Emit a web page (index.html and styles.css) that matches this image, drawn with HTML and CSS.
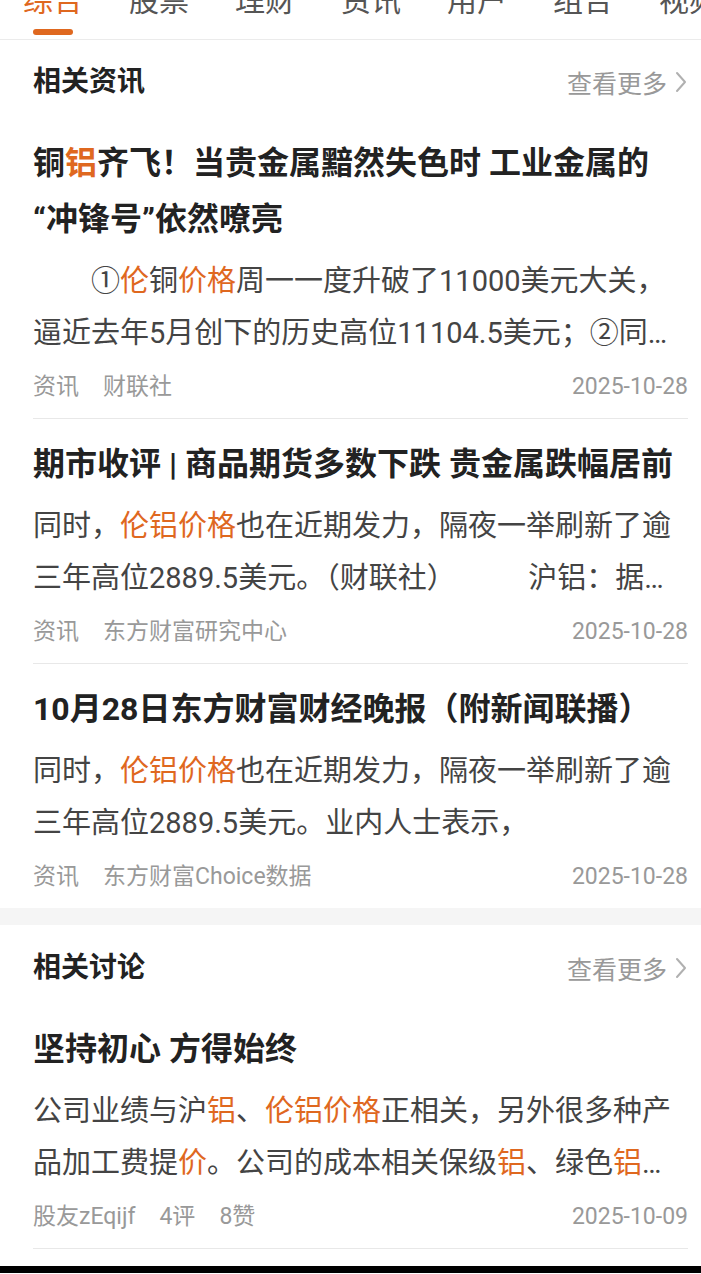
FILE: index.html
```html
<!DOCTYPE html>
<html lang="zh-CN">
<head>
    <meta charset="UTF-8">
    <meta name="viewport" content="width=device-width, initial-scale=1.0">
    <title>搜索结果 - 综合</title>
    <link rel="stylesheet" href="styles.css">
</head>
<body>

    <div class="tabs">
        <div class="tab-row">
            <div class="tab active">综合<span class="indicator"></span></div>
            <div class="tab">股票</div>
            <div class="tab">理财</div>
            <div class="tab">资讯</div>
            <div class="tab">用户</div>
            <div class="tab">组合</div>
            <div class="tab">视频</div>
        </div>
    </div>

    <div class="section">
        <div class="section-head">
            <h2>相关资讯</h2>
            <a class="more">查看更多
                <svg width="14" height="22" viewBox="0 0 14 22"><polyline points="3,2 11,11 3,20" fill="none" stroke="#b0b0b0" stroke-width="2" stroke-linecap="round" stroke-linejoin="round"/></svg>
            </a>
        </div>

        <div class="item">
            <h3 class="title">铜<em>铝</em>齐飞！当贵金属黯然失色时 工业金属的“冲锋号”依然嘹亮</h3>
            <p class="summary indent">①<em>伦</em>铜<em>价格</em>周一一度升破了11000美元大关，逼近去年5月创下的历史高位11104.5美元；②同时，伦铝价格也在近期发力，隔夜一举刷新了逾三年高位。</p>
            <div class="meta">
                <span>资讯</span>
                <span>财联社</span>
                <span class="date">2025-10-28</span>
            </div>
        </div>

        <div class="item">
            <h3 class="title">期市收评 | 商品期货多数下跌 贵金属跌幅居前</h3>
            <p class="summary">同时，<em>伦铝价格</em>也在近期发力，隔夜一举刷新了逾三年高位2889.5美元。（财联社）　　　沪铝：据上海有色网报道，国内铝锭社会库存继续下降。</p>
            <div class="meta">
                <span>资讯</span>
                <span>东方财富研究中心</span>
                <span class="date">2025-10-28</span>
            </div>
        </div>

        <div class="item last">
            <h3 class="title">10月28日东方财富财经晚报（附新闻联播）</h3>
            <p class="summary">同时，<em>伦铝价格</em>也在近期发力，隔夜一举刷新了逾三年高位2889.5美元。业内人士表示，</p>
            <div class="meta">
                <span>资讯</span>
                <span>东方财富Choice数据</span>
                <span class="date">2025-10-28</span>
            </div>
        </div>
    </div>

    <div class="gap"></div>

    <div class="section">
        <div class="section-head lower">
            <h2>相关讨论</h2>
            <a class="more">查看更多
                <svg width="14" height="22" viewBox="0 0 14 22"><polyline points="3,2 11,11 3,20" fill="none" stroke="#b0b0b0" stroke-width="2" stroke-linecap="round" stroke-linejoin="round"/></svg>
            </a>
        </div>

        <div class="item">
            <h3 class="title">坚持初心 方得始终</h3>
            <p class="summary">公司业绩与沪<em>铝</em>、<em>伦铝价格</em>正相关，另外很多种产品加工费提<em>价</em>。公司的成本相关保级<em>铝</em>、绿色<em>铝</em>等产品溢价较高，盈利能力持续提升。</p>
            <div class="meta">
                <span>股友zEqijf</span>
                <span>4评</span>
                <span>8赞</span>
                <span class="date">2025-10-09</span>
            </div>
        </div>
    </div>

    <div class="navbar"></div>

</body>
</html>
```

FILE: styles.css
```css
body {
    margin: 0;
    background: #fff;
    font-family: Roboto, "Noto Sans CJK SC", sans-serif;
    color: #333;
}
.tabs {
    height: 39px;
    overflow: hidden;
    border-bottom: 1px solid #ebebeb;
}
.tab-row {
    display: flex;
    margin-top: -14px;
}
.tab {
    flex: 0 0 106px;
    display: flex;
    flex-direction: column;
    align-items: center;
    font-size: 30px;
    line-height: 30px;
    color: #555;
}
.tab.active {
    color: #df681f;
}
.indicator {
    width: 40px;
    height: 6px;
    margin-top: 13px;
    border-radius: 3px;
    background: #df681f;
}
.section {
    padding: 0 13px 0 33px;
}
.section-head {
    display: flex;
    justify-content: space-between;
    align-items: center;
    padding: 22px 0 16px;
    height: 40px;
}
.section-head.lower {
    padding-top: 23px;
}
.section-head h2 {
    margin: 0;
    font-size: 28px;
    line-height: 40px;
    font-weight: bold;
    color: #222;
}
.more {
    display: flex;
    align-items: center;
    font-size: 25px;
    color: #999;
}
.more svg {
    margin-left: 7px;
}
.item {
    padding: 17px 0 16px;
    border-bottom: 1px solid #e8e8e8;
}
.item.last {
    border-bottom: none;
}
.title {
    margin: 0;
    font-size: 32px;
    line-height: 56px;
    font-weight: bold;
    color: #222;
}
.summary {
    margin: 8px 0 0;
    font-size: 29px;
    line-height: 52px;
    color: #444;
    display: -webkit-box;
    -webkit-line-clamp: 2;
    -webkit-box-orient: vertical;
    overflow: hidden;
}
.summary.indent {
    text-indent: 2em;
}
em {
    font-style: normal;
    color: #df681f;
}
.meta {
    display: flex;
    gap: 24px;
    margin-top: 13px;
    font-size: 23px;
    line-height: 30px;
    color: #999;
}
.meta .date {
    margin-left: auto;
}
.gap {
    height: 17px;
    background: #f5f5f5;
}
.navbar {
    height: 7px;
    margin-top: 17px;
    background: #000;
}
```
